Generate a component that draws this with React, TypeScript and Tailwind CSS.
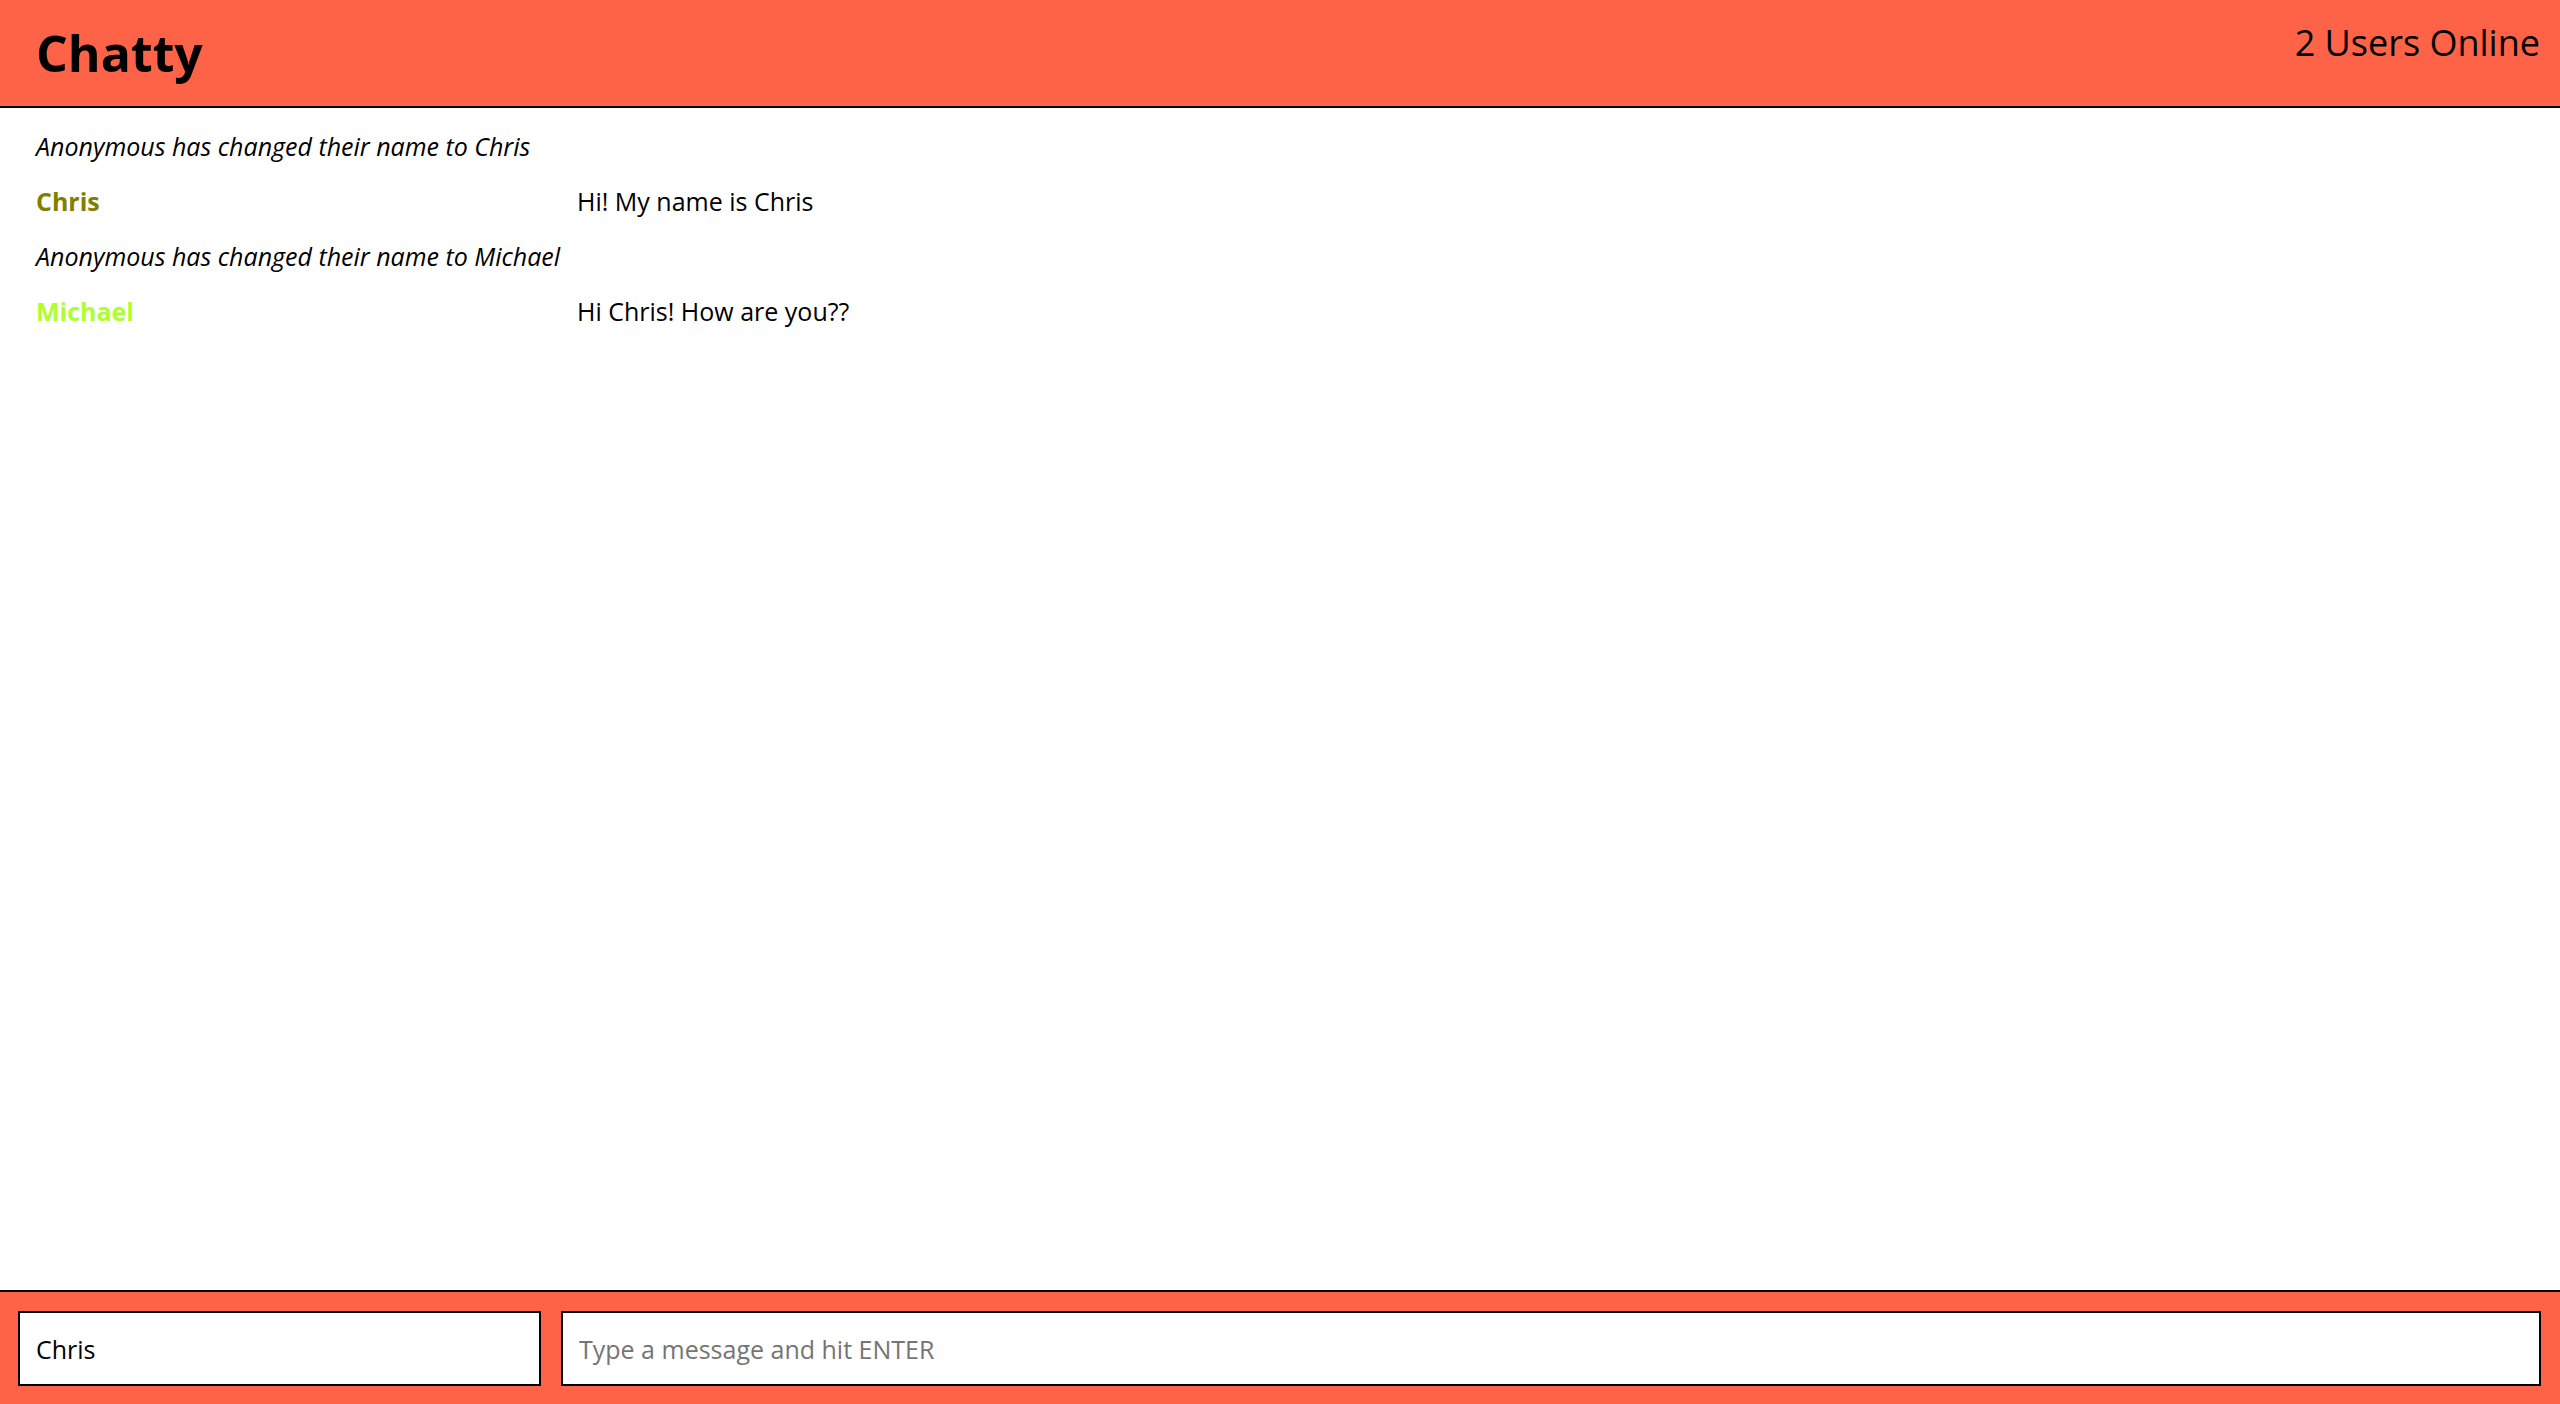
const messages = [
  { type: "system", content: "Anonymous has changed their name to Chris" },
  { type: "message", username: "Chris", color: "text-[#808000]", content: "Hi! My name is Chris" },
  { type: "system", content: "Anonymous has changed their name to Michael" },
  { type: "message", username: "Michael", color: "text-[#adff2f]", content: "Hi Chris! How are you??" },
];

const App = () => {
  return (
    <div className="flex h-[1404px] flex-col bg-white font-['Open_Sans',sans-serif] text-black">
      <nav className="flex h-[108px] shrink-0 items-start justify-between border-b-2 border-black bg-[#ff6347] pl-9 pr-5">
        <a href="/" className="mt-[28px] text-[50px] leading-none font-bold">
          Chatty
        </a>
        <span className="mt-[25px] text-[36px] leading-none">2 Users Online</span>
      </nav>

      <main className="flex-1 overflow-auto pt-[11px] pl-9">
        {messages.map((message, index) =>
          message.type === "system" ? (
            <div key={index} className="h-[55px] text-[25px] leading-[55px] italic">
              {message.content}
            </div>
          ) : (
            <div key={index} className="flex h-[55px] text-[25px] leading-[55px]">
              <span className={`w-[541px] shrink-0 font-bold ${message.color}`}>
                {message.username}
              </span>
              <span>{message.content}</span>
            </div>
          )
        )}
      </main>

      <footer className="flex h-[114px] shrink-0 items-start gap-5 border-t-2 border-black bg-[#ff6347] pt-[19px] pr-[19px] pl-[18px]">
        <input
          className="h-[75px] w-[523px] shrink-0 border-2 border-black bg-white px-4 text-[25px] outline-none"
          defaultValue="Chris"
          placeholder="Your Name (Optional)"
        />
        <input
          className="h-[75px] flex-1 border-2 border-black bg-white px-4 text-[25px] outline-none placeholder:text-[#757575]"
          placeholder="Type a message and hit ENTER"
        />
      </footer>
    </div>
  );
};

export default App;
